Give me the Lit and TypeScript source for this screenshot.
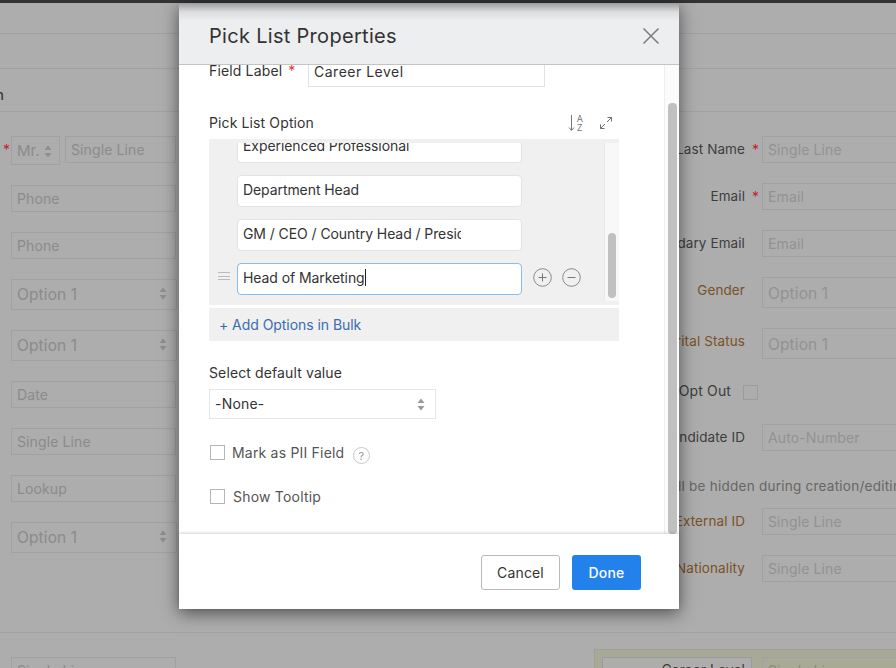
import { LitElement, html, css, svg } from "lit";
import { customElement } from "lit/decorators.js";

const arrows = svg`<svg class="arr" width="8" height="13" viewBox="0 0 8 13"><path d="M4 0.5 7.500 5H.5zM4 12.500.5 8h7z" fill="currentColor"/></svg>`;

@customElement("app-root")
export class AppRoot extends LitElement {
  static styles = css`
    :host { display: block; font-family: Inter, "Liberation Sans", sans-serif; font-size: 14px; color: #333; }
    * { box-sizing: border-box; }
    .page { position: relative; width: 896px; height: 668px; overflow: hidden; background: #adadad; }
    .topbar { height: 3px; background: #333; }
    .band { border-bottom: 1px solid #a1a1a1; }
    .b1 { height: 31px; }
    .b2 { height: 35px; }
    .b3 { height: 43px; display: flex; align-items: center; padding-top: 9px; }
    .clipHead { width: 4px; display: flex; justify-content: flex-end; white-space: nowrap; font-weight: 500; color: #3a3a3a; }
    .form { height: 521px; padding-top: 24px; border-bottom: 1px solid #a1a1a1; display: flex; }
    .lcol { width: 594px; flex: none; padding-left: 11px; display: flex; flex-direction: column; gap: 20px; }
    .rcol { width: 302px; flex: none; display: flex; flex-direction: column; }
    .f { height: 27px; width: 165px; flex: none; border: 1px solid #a1a1a1; padding: 0 5px; display: flex; align-items: center; color: #8b8b8b; white-space: nowrap; letter-spacing: .12px; }
    .sel { height: 31px; width: 166px; justify-content: space-between; padding-right: 9px; font-size: 15.500px; }
    .arr { color: #8e8e8e; flex: none; }
    .sel .arr { margin-top: -3px; }
    .namerow { display: flex; gap: 5px; position: relative; height: 29px; }
    .star { color: #c8202c; }
    .lstar { position: absolute; left: -8px; top: 5px; }
    .mr { width: 49px; height: 29px; padding-right: 0; justify-content: flex-start; gap: 4px; font-size: 15px; letter-spacing: 0; }
    .mr .arr { margin-top: 1px; }
    .sl { width: 111px; }
    .r { display: flex; align-items: flex-start; height: 27px; margin-bottom: 20px; }
    .r.tall { height: 31px; }
    .lab { width: 151px; flex: none; text-align: right; white-space: nowrap; display: flex; justify-content: flex-end; color: #3d3d3d; padding-top: 5px; font-size: 13.500px; letter-spacing: .1px; }
    .lab.b { color: #7a5128; }
    .mark { width: 17px; padding: 5px 0 0 7px; flex: none; }
    .r .f { width: 200px; flex: none; color: #929292; }
    .r.tall .f { height: 31px; font-size: 15.500px; padding-top: 2px; }
    .cb { width: 15px; height: 15px; border: 1px solid #9c9c9c; flex: none; }
    .r.opt { height: 15px; margin: 6px 0 24px; align-items: center; }
    .r.opt .lab { width: 137px; padding: 0 0 4px; font-size: 14px; letter-spacing: .12px; }
    .r.opt .cb { margin-left: 12px; }
    .note { height: 22px; margin: 4px 0 11px; white-space: nowrap; display: flex; align-items: center; color: #666; font-size: 13.500px; letter-spacing: .25px; padding-left: 37px; }
    .lower { display: flex; justify-content: space-between; }
    .lowleft { padding: 24px 0 0 11px; }
    .yel { margin-top: 16px; width: 302px; height: 40px; padding: 7px 0 0 7px; background: #a9a997; border-left: 1px solid #a1a190; border-top: 1px solid #a1a190; display: flex; gap: 10px; }
    .yl { width: 150px; height: 27px; flex: none; background: #adadad; border: 1px solid #9a9a9f; text-align: right; padding: 3px 6px 0 0; color: #4a3a2a; }
    .yel .f { width: 140px; }

    .dlg { position: absolute; left: 179px; top: 3px; width: 500px; height: 606px; background: #fff; display: flex; flex-direction: column; box-shadow: 0 4px 16px rgba(0,0,0,.55); }
    .hd { height: 62px; flex: none; background: linear-gradient(#9d9d9d 0, #dcdddf 9px, #eceef0 18px); border-bottom: 1px solid #c4c4c4; display: flex; align-items: center; justify-content: space-between; padding: 5px 19px 0 30px; }
    .ttl { font-size: 20px; color: #333; letter-spacing: .3px; }
    .body { flex: 1; position: relative; overflow: hidden; padding: 0 0 0 30px; }
    .vtrack { position: absolute; right: 0; top: 0; bottom: 0; width: 15px; background: #fbfbfb; border-left: 1px solid #eee; }
    .vthumb { position: absolute; left: 3px; top: 38px; bottom: 0; width: 9px; background: #c0c0c0; border-radius: 4px; }
    .content { width: 410px; margin-top: -8px; }
    .fl { display: flex; height: 30px; }
    .fl .t { width: 99px; padding-top: 5px; white-space: nowrap; letter-spacing: .15px; }
    .rs { color: #f0323c; margin-left: 2px; }
    .fi { width: 237px; height: 30px; border: 1px solid #e2e2e2; padding: 0 5px 2px; display: flex; align-items: center; letter-spacing: .5px; }
    .plh { display: flex; align-items: center; justify-content: space-between; height: 24px; margin-top: 24px; padding-right: 7px; letter-spacing: .12px; }
    .plh > span { margin-bottom: 2px; }
    .icons { display: flex; gap: 17px; align-items: center; }
    .sort { display: flex; align-items: center; gap: 2px; }
    .az { display: flex; flex-direction: column; font-size: 9px; line-height: 9px; color: #777; }
    .panel { margin-top: 4px; height: 166px; background: #f0f0f0; padding: 4px 0; display: flex; position: relative; }
    .items { flex: 1; overflow: hidden; padding-left: 29px; display: flex; flex-direction: column; gap: 12px; }
    .it { display: flex; align-items: center; flex: none; position: relative; }
    .it:first-child { margin-top: -12px; }
    .inp { width: 285px; height: 32px; flex: none; background: #fff; border: 1px solid #e3e3e3; border-radius: 4px; padding: 0 4px 4px 5px; display: flex; align-items: center; white-space: nowrap; overflow: hidden; letter-spacing: -.08px; margin-left: -1px; }
    .inp.focus { border-color: #85bdec; }
    .inp span.clip { display: block; width: 218px; overflow: hidden; }
    .caret { display: inline-block; width: 1px; height: 17px; background: #222; }
    .handle { position: absolute; left: -20px; top: 9px; width: 12px; height: 8px; border-top: 1px solid #bbb; border-bottom: 1px solid #bbb; }
    .handle::after { content: ""; display: block; height: 1px; margin-top: 2.500px; background: #bbb; }
    .pm { display: flex; gap: 10px; margin: -3px 0 0 11px; }
    .strack { width: 15px; flex: none; background: #f8f8f8; border-left: 1px solid #e8e8e8; position: relative; }
    .sthumb { position: absolute; left: 3px; top: 90px; width: 8px; height: 65px; background: #c0c0c0; border-radius: 4px; }
    .bulk { margin-top: 3px; height: 33px; background: #f0f0f0; display: flex; align-items: center; padding-left: 10px; color: #3a6cae; letter-spacing: -.05px; }
    .sdl { margin-top: 22px; height: 20px; padding-bottom: 2px; display: flex; align-items: center; letter-spacing: .12px; }
    .dsel { margin-top: 6px; width: 227px; height: 30px; border: 1px solid #e6e6e6; display: flex; align-items: center; justify-content: space-between; padding: 0 10px 0 5px; letter-spacing: .2px; }
    .dsel span { margin-bottom: 2px; }
    .dsel .arr { color: #999; }
    .chk { display: flex; align-items: center; padding-left: 1px; height: 15px; color: #555; letter-spacing: .2px; }
    .chk .box { width: 15px; height: 15px; border: 1px solid #b5b5b5; margin-right: 7px; flex: none; }
    .c1 { margin-top: 26px; }
    .c2 { margin-top: 29px; }
    .c2 .box { margin-right: 8px; }
    .help { margin: 5px 0 0 9px; flex: none; }
    .ft { height: 75px; flex: none; position: relative; display: flex; justify-content: flex-end; gap: 12px; padding: 21px 38px 0 0; box-shadow: 0 -1px 3px rgba(0,0,0,.18); background: #fff; }
    .btn { height: 35px; border-radius: 3px; display: flex; align-items: center; justify-content: center; letter-spacing: .15px; }
    .cancel { width: 79px; border: 1px solid #b9b9b9; color: #333; background: #fff; }
    .done { width: 69px; background: #2381ec; color: #fff; font-weight: 500; }
  `;

  private leftFields() {
    return html`
      <div class="f">Phone</div>
      <div class="f">Phone</div>
      <div class="f sel"><span>Option 1</span>${arrows}</div>
      <div class="f sel"><span>Option 1</span>${arrows}</div>
      <div class="f">Date</div>
      <div class="f">Single Line</div>
      <div class="f">Lookup</div>
      <div class="f sel"><span>Option 1</span>${arrows}</div>`;
  }

  render() {
    return html`<div class="page">
      <div class="topbar"></div>
      <div class="band b1"></div>
      <div class="band b2"></div>
      <div class="band b3"><div class="clipHead">Candidate Information</div></div>
      <div class="form">
        <div class="lcol">
          <div class="namerow">
            <span class="star lstar">*</span>
            <div class="f sel mr"><span>Mr.</span>${arrows}</div>
            <div class="f sl">Single Line</div>
          </div>
          ${this.leftFields()}
        </div>
        <div class="rcol">
          <div class="r"><div class="lab">Last Name</div><div class="mark star">*</div><div class="f">Single Line</div></div>
          <div class="r"><div class="lab">Email</div><div class="mark star">*</div><div class="f">Email</div></div>
          <div class="r"><div class="lab">Secondary Email</div><div class="mark"></div><div class="f">Email</div></div>
          <div class="r tall"><div class="lab b">Gender</div><div class="mark"></div><div class="f">Option 1</div></div>
          <div class="r tall"><div class="lab b">Marital Status</div><div class="mark"></div><div class="f">Option 1</div></div>
          <div class="r opt"><div class="lab">Email Opt Out</div><div class="cb"></div></div>
          <div class="r"><div class="lab">Candidate ID</div><div class="mark"></div><div class="f">Auto-Number</div></div>
          <div class="note">This will be hidden during creation/editing</div>
          <div class="r"><div class="lab b">External ID</div><div class="mark"></div><div class="f">Single Line</div></div>
          <div class="r"><div class="lab b">Nationality</div><div class="mark"></div><div class="f">Single Line</div></div>
        </div>
      </div>
      <div class="lower">
        <div class="lowleft"><div class="f">Single Line</div></div>
        <div class="yel"><div class="yl">Career Level</div><div class="f">Single Line</div></div>
      </div>

      <div class="dlg">
        <div class="hd">
          <div class="ttl">Pick List Properties</div>
          <svg width="18" height="18" viewBox="0 0 18 18"><path d="M1.500 1.500 16.500 16.500M16.500 1.500 1.500 16.500" stroke="#7c7c7c" stroke-width="1.500" fill="none"/></svg>
        </div>
        <div class="body">
          <div class="content">
            <div class="fl"><div class="t">Field Label <span class="rs">*</span></div><div class="fi">Career Level</div></div>
            <div class="plh">
              <span>Pick List Option</span>
              <div class="icons">
                <div class="sort">
                  <svg width="7" height="16" viewBox="0 0 7 16"><path d="M3.500 0v15M1 12.500l2.500 3 2.500-3" stroke="#777" fill="none"/></svg>
                  <div class="az"><span>A</span><span>Z</span></div>
                </div>
                <svg width="12" height="12" viewBox="0 0 12 12"><path d="M7 5 11.500.5M7.500.5h4v4M5 7 .5 11.500M.5 7.500v4h4" stroke="#6f6f6f" fill="none"/></svg>
              </div>
            </div>
            <div class="panel">
              <div class="items">
                <div class="it"><div class="inp">Experienced Professional</div></div>
                <div class="it"><div class="inp">Department Head</div></div>
                <div class="it"><div class="inp"><span class="clip">GM / CEO / Country Head / President</span></div></div>
                <div class="it">
                  <div class="handle"></div>
                  <div class="inp focus">Head of Marketing<span class="caret"></span></div>
                  <div class="pm">
                    <svg width="19" height="19" viewBox="0 0 19 19"><circle cx="9.500" cy="9.500" r="8.800" stroke="#8a8a8a" fill="none"/><path d="M5.500 9.500h8M9.500 5.500v8" stroke="#777" fill="none"/></svg>
                    <svg width="19" height="19" viewBox="0 0 19 19"><circle cx="9.500" cy="9.500" r="8.800" stroke="#8a8a8a" fill="none"/><path d="M5.500 9.500h8" stroke="#777" fill="none"/></svg>
                  </div>
                </div>
              </div>
              <div class="strack"><div class="sthumb"></div></div>
            </div>
            <div class="bulk">+ Add Options in Bulk</div>
            <div class="sdl">Select default value</div>
            <div class="dsel"><span>-None-</span>${arrows}</div>
            <div class="chk c1"><div class="box"></div>Mark as PII Field
              <svg class="help" width="17" height="17" viewBox="0 0 17 17"><circle cx="8.500" cy="8.500" r="8" stroke="#c8c8c8" fill="none"/><text x="8.500" y="12.500" font-size="11" text-anchor="middle" fill="#999" font-family="Inter, sans-serif">?</text></svg>
            </div>
            <div class="chk c2"><div class="box"></div>Show Tooltip</div>
          </div>
          <div class="vtrack"><div class="vthumb"></div></div>
        </div>
        <div class="ft">
          <div class="btn cancel">Cancel</div>
          <div class="btn done">Done</div>
        </div>
      </div>
    </div>`;
  }
}
